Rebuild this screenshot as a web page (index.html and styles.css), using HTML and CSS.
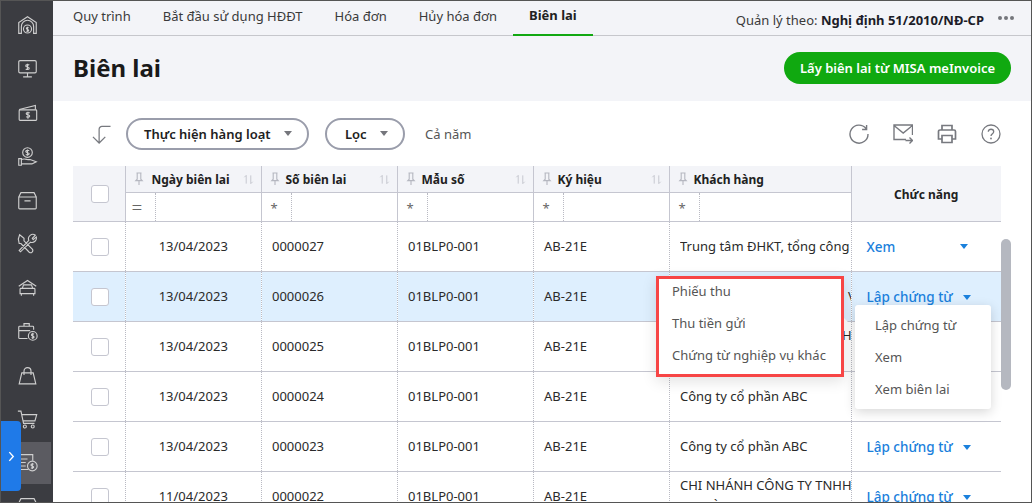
FILE: index.html
```html
<!DOCTYPE html>
<html lang="en">
<head>
    <meta charset="UTF-8">
    <meta name="viewport" content="width=device-width, initial-scale=1.0">
    <title>Biên lai</title>
    <link rel="stylesheet" href="styles.css">
</head>
<body>
    <svg class="defs" width="0" height="0">
        <symbol id="pin" viewBox="0 0 12 14"><path d="M3.5 1h5M4.2 1v6.2L2.8 8.6h6.4L7.8 7.2V1M6 8.6V13" fill="none" stroke="#b5b7c0" stroke-width="1.1"/></symbol>
        <symbol id="sort" viewBox="0 0 12 12"><path d="M3.5 10.5V1.5L1.5 3.5M8.5 1.5v9l2-2" fill="none" stroke="#c2c4cc" stroke-width="1"/></symbol>
    </svg>
    <div class="app">
        <nav class="sidebar">
            <div class="side-item"><svg class="side-icon" viewBox="0 0 24 24"><path d="M2 21V8.5L12 2l10 6.5V21h-3v-8a7 7 0 0 0-14 0v8z"/><circle cx="12" cy="16" r="4.6"/><path d="M12 13.5v5M13.3 14.6c-1-.6-2.6-.3-2.6.8s2.6 1 2.6 2.2-1.6 1.3-2.6.7"/></svg></div>
            <div class="side-item"><svg class="side-icon" viewBox="0 0 24 24"><rect x="2" y="3" width="20" height="14" rx="1.5"/><path d="M12 17v4M7 21.5h10M12 6.5v7M14 8c-1-.8-4-.6-4 1s4 1 4 2.600-3 1.800-4 1"/></svg></div>
            <div class="side-item"><svg class="side-icon" viewBox="0 0 24 24"><path d="M2.500 8.500 21 4v4.500"/><rect x="2.500" y="9" width="20" height="12" rx="1"/><path d="M12.500 11v8M14.500 12.500c-1-.8-4-.6-4 .9s4 1 4 2.600-3 1.700-4 .8"/></svg></div>
            <div class="side-item"><svg class="side-icon" viewBox="0 0 24 24"><circle cx="12" cy="7.500" r="5.500"/><path d="M12 4v7M14 5.300c-1-.7-4-.5-4 1.100s4 1 4 2.500-3 1.600-4 .9M2 14.500h3v7.500H2zM5 15.500c3-1.500 5-.5 7 0h3l7 2.500-5 2.500H5"/></svg></div>
            <div class="side-item"><svg class="side-icon" viewBox="0 0 24 24"><path d="M2 8l2.500-5h15L22 8v12.500a1 1 0 0 1-1 1H3a1 1 0 0 1-1-1zM2 8h20M8.500 12.500h7"/></svg></div>
            <div class="side-item"><svg class="side-icon" viewBox="0 0 24 24"><path d="M3 2l5 4v3l9.500 9.500a2.500 2.500 0 0 1-3.500 3.500L4.500 12H2.500L1.500 7zM21 2.500l-3.500 3.500 1 1.500 3.500-3a5 5 0 0 1-6.500 6L4 21.500 2.500 20 13.500 8.500A5 5 0 0 1 21 2.500z"/></svg></div>
            <div class="side-item"><svg class="side-icon" viewBox="0 0 24 24"><path d="M2 10.500 12 4l10 6.500M6 13l1.500-4h9L18 13M4.500 13h15a1 1 0 0 1 1 1v5h-17v-5a1 1 0 0 1 1-1zM5 19v2.500M19 19v2.500"/></svg></div>
            <div class="side-item"><svg class="side-icon" viewBox="0 0 24 24"><path d="M12 20H3a1 1 0 0 1-1-1V7a1 1 0 0 1 1-1h15a1 1 0 0 1 1 1v3M2 11h13M8 6V3h6v3"/><circle cx="18" cy="17" r="5"/><path d="M18 13.500v7M19.500 15c-1-.7-3-.5-3 .9s3 1 3 2.300-2 1.500-3 .8"/></svg></div>
            <div class="side-item"><svg class="side-icon" viewBox="0 0 24 24"><path d="M5.500 9h13l3 12.500h-19zM8 11.500V7a4 4 0 0 1 8 0v4.500"/></svg></div>
            <div class="side-item"><svg class="side-icon" viewBox="0 0 24 24"><path d="M1 2.500h3.500l3 14h12.500M5.500 6.500h17l-2 7H7"/><circle cx="9" cy="20" r="1.700"/><circle cx="18" cy="20" r="1.700"/></svg></div>
            <div class="side-item active"><svg class="side-icon" viewBox="0 0 24 24"><path d="M4 3h14v7M1 8h11M1 12h9M1 16h9M4 20h9"/><circle cx="17.500" cy="16" r="5.500"/><path d="M17.500 12.500v7M19 14c-1-.7-3-.5-3 .9s3 1 3 2.300-2 1.500-3 .8"/></svg></div>
            <div class="side-item"><svg class="side-icon" viewBox="0 0 24 24"><path d="M2 8l2.500-5h15L22 8v12H2zM2 8h20"/></svg></div>
            <div class="side-toggle"><svg viewBox="0 0 8 12" width="7" height="11"><path d="M1.500 1 6 6l-4.500 5" fill="none" stroke="#fff" stroke-width="1.600"/></svg></div>
        </nav>

        <main class="main">
            <header class="tabs">
                <a class="tab">Quy trình</a>
                <a class="tab">Bắt đầu sử dụng HĐĐT</a>
                <a class="tab">Hóa đơn</a>
                <a class="tab">Hủy hóa đơn</a>
                <a class="tab tab-active">Biên lai</a>
                <div class="decree">Quản lý theo: <b>Nghị định 51/2010/NĐ-CP</b></div>
                <div class="more"><i></i><i></i><i></i></div>
            </header>

            <section class="title-bar">
                <h1>Biên lai</h1>
                <button class="green-btn">Lấy biên lai từ MISA meInvoice</button>
            </section>

            <section class="toolbar">
                <svg class="back-icon" viewBox="0 0 20 20"><path d="M19.500 1.500h-9a3 3 0 0 0-3 3v14.500M1 12.500l6.500 6.500 6.500-6.500" fill="none" stroke="#77797f" stroke-width="1.300"/></svg>
                <button class="pill pill-bulk">Thực hiện hàng loạt<span class="caret-grey"></span></button>
                <button class="pill pill-filter">Lọc<span class="caret-grey"></span></button>
                <span class="period">Cả năm</span>
                <div class="tools">
                    <svg class="tool" viewBox="0 0 20 20"><path d="M17 4.500A9 9 0 1 0 19 10M17.600 1v4.500h-4.500" fill="none" stroke="#77797f" stroke-width="1.400"/></svg>
                    <svg class="tool" viewBox="0 0 20 20"><path d="M13 15.500H1V1h18.500v10M1 1.500l9.200 7.500 9.300-7.500M12.500 16.500h7M16.500 13.500l3 3-3 3" fill="none" stroke="#77797f" stroke-width="1.400"/></svg>
                    <svg class="tool" viewBox="0 0 20 20"><path d="M5 6V1.500h10V6M5 15H1.500V7.500a1.500 1.500 0 0 1 1.500-1.500h14a1.500 1.500 0 0 1 1.500 1.500V15H15M5 11.500h10V18.500H5z" fill="none" stroke="#77797f" stroke-width="1.700"/></svg>
                    <svg class="tool" viewBox="0 0 20 20"><circle cx="10" cy="10" r="9" fill="none" stroke="#77797f" stroke-width="1.300"/><path d="M7.300 7.700c0-3.300 5.400-3.300 5.400 0 0 2-2.700 2-2.700 4.300" fill="none" stroke="#77797f" stroke-width="1.300"/><circle cx="10" cy="14.500" r=".9" fill="#77797f"/></svg>
                </div>
            </section>

            <div class="table-wrap">
                <table class="grid">
                    <colgroup>
                        <col class="c-check"><col class="c-mid"><col class="c-mid"><col class="c-mid"><col class="c-mid"><col class="c-cust"><col class="c-fn">
                    </colgroup>
                    <thead>
                        <tr class="head-row">
                            <th rowspan="2" class="head-check"><span class="check"></span></th>
                            <th class="th-date"><div class="th-in"><svg class="pin"><use href="#pin"/></svg><span>Ngày biên lai</span><svg class="sort"><use href="#sort"/></svg></div></th>
                            <th><div class="th-in"><svg class="pin"><use href="#pin"/></svg><span>Số biên lai</span><svg class="sort"><use href="#sort"/></svg></div></th>
                            <th><div class="th-in"><svg class="pin"><use href="#pin"/></svg><span>Mẫu số</span><svg class="sort"><use href="#sort"/></svg></div></th>
                            <th><div class="th-in"><svg class="pin"><use href="#pin"/></svg><span>Ký hiệu</span><svg class="sort"><use href="#sort"/></svg></div></th>
                            <th><div class="th-in"><svg class="pin"><use href="#pin"/></svg><span>Khách hàng</span></div></th>
                            <th rowspan="2" class="head-fn">Chức năng</th>
                        </tr>
                        <tr class="filter-row">
                            <td><div class="op eq">=</div></td>
                            <td><div class="op">*</div></td>
                            <td><div class="op">*</div></td>
                            <td><div class="op">*</div></td>
                            <td><div class="op">*</div></td>
                        </tr>
                    </thead>
                    <tbody>
                        <tr>
                            <td class="cell-check"><span class="check"></span></td>
                            <td class="date">13/04/2023</td><td>0000027</td><td>01BLP0-001</td><td>AB-21E</td>
                            <td class="cust"><div class="one-line">Trung tâm ĐHKT, tổng công ty</div></td>
                            <td class="fn"><span class="fn-in">Xem<span class="caret-blue caret-xem"></span></span></td>
                        </tr>
                        <tr class="selected">
                            <td class="cell-check"><span class="check"></span></td>
                            <td class="date">13/04/2023</td><td>0000026</td><td>01BLP0-001</td><td>AB-21E</td>
                            <td class="cust"><div class="one-line">CHI NHÁNH CÔNG TY, TNH V</div></td>
                            <td class="fn"><span class="fn-in">Lập chứng từ<span class="caret-blue"></span></span></td>
                        </tr>
                        <tr>
                            <td class="cell-check"><span class="check"></span></td>
                            <td class="date">13/04/2023</td><td>0000025</td><td>01BLP0-001</td><td>AB-21E</td>
                            <td class="cust"><div class="two-line">CHI NHÁNH CÔNG TY TNHH<br>TẠI HÀ NAM</div></td>
                            <td class="fn"><span class="fn-in">Lập chứng từ<span class="caret-blue"></span></span></td>
                        </tr>
                        <tr>
                            <td class="cell-check"><span class="check"></span></td>
                            <td class="date">13/04/2023</td><td>0000024</td><td>01BLP0-001</td><td>AB-21E</td>
                            <td class="cust">Công ty cổ phần ABC</td>
                            <td class="fn"><span class="fn-in">Lập chứng từ<span class="caret-blue"></span></span></td>
                        </tr>
                        <tr>
                            <td class="cell-check"><span class="check"></span></td>
                            <td class="date">13/04/2023</td><td>0000023</td><td>01BLP0-001</td><td>AB-21E</td>
                            <td class="cust">Công ty cổ phần ABC</td>
                            <td class="fn"><span class="fn-in">Lập chứng từ<span class="caret-blue"></span></span></td>
                        </tr>
                        <tr>
                            <td class="cell-check"><span class="check"></span></td>
                            <td class="date">11/04/2023</td><td>0000022</td><td>01BLP0-001</td><td>AB-21E</td>
                            <td class="cust"><div class="two-line">CHI NHÁNH CÔNG TY TNHH<br>TẠI HÀ NAM</div></td>
                            <td class="fn"><span class="fn-in">Lập chứng từ<span class="caret-blue"></span></span></td>
                        </tr>
                    </tbody>
                </table>
            </div>
        </main>

        <div class="scroll-thumb"></div>
        <div class="menu-arrow"></div>
        <div class="menu menu-sub">
            <div class="menu-item">Phiếu thu</div>
            <div class="menu-item">Thu tiền gửi</div>
            <div class="menu-item">Chứng từ nghiệp vụ khác</div>
        </div>
        <div class="menu menu-main">
            <div class="menu-item">Lập chứng từ</div>
            <div class="menu-item">Xem</div>
            <div class="menu-item">Xem biên lai</div>
        </div>
    </div>
</body>
</html>
```

FILE: styles.css
```css
* {
    box-sizing: border-box;
}

body {
    margin: 0;
    font-family: "Noto Sans", Arial, sans-serif;
    font-size: 13px;
    color: #212121;
    background-color: white;
}

.defs {
    position: absolute;
}

.app {
    position: relative;
    display: flex;
    width: 1032px;
    height: 503px;
    overflow: hidden;
    border: 1px solid #555;
}

/* sidebar */
.sidebar {
    position: relative;
    flex: none;
    width: 52px;
    padding-top: 3px;
    background-color: #3b3c41;
    overflow: hidden;
}

.side-item {
    display: flex;
    justify-content: center;
    align-items: center;
    width: 50px;
    height: 42px;
    margin-bottom: 1.8px;
    padding-left: 2px;
}

.side-item.active {
    background-color: #5b5b61;
}

.side-icon {
    width: 21px;
    height: 21px;
    fill: none;
    stroke: #cfcfcf;
    stroke-width: 1.3;
}

.side-toggle {
    position: absolute;
    left: 0;
    top: 420px;
    width: 20px;
    height: 70px;
    display: flex;
    align-items: center;
    justify-content: center;
    background-color: #1f7ae8;
    border-radius: 0 4px 4px 0;
}

/* main */
.main {
    flex: 1;
    min-width: 0;
    display: flex;
    flex-direction: column;
}

.tabs {
    flex: none;
    display: flex;
    align-items: stretch;
    height: 35px;
    padding-left: 4px;
    padding-right: 17px;
    background-color: #f3f4f8;
    border-bottom: 1px solid #c6c7cc;
}

.tab {
    display: flex;
    align-items: center;
    padding: 0 16px 6px;
    height: 35px;
    color: #3a3a3a;
}

.tab-active {
    font-weight: 700;
    color: #212121;
    border-bottom: 2px solid #12a812;
}

.decree {
    margin-left: auto;
    align-self: center;
    padding-top: 4px;
    color: #3a3a3a;
}

.decree b {
    color: #1c1c28;
}

.more {
    display: flex;
    align-items: center;
    gap: 2px;
    margin-left: 14px;
    padding-bottom: 1px;
}

.more i {
    width: 4px;
    height: 4px;
    border-radius: 50%;
    background-color: #75767c;
}

.title-bar {
    flex: none;
    display: flex;
    justify-content: space-between;
    align-items: center;
    height: 65px;
    padding: 0 20px;
    background-color: #f3f4f8;
}

h1 {
    margin: 0 0 3px;
    font-size: 24px;
    font-weight: 700;
    color: #1a1a1a;
}

.green-btn {
    width: 227px;
    height: 32px;
    padding: 0;
    margin-bottom: 2px;
    border: none;
    border-radius: 16px;
    font: 600 13px "Noto Sans", Arial, sans-serif;
    color: white;
    background-color: #10a910;
}

.toolbar {
    flex: none;
    display: flex;
    align-items: center;
    height: 65px;
    padding: 0 30px 0 39px;
    background-color: white;
}

.back-icon {
    width: 19px;
    height: 19px;
    margin-top: 1px;
    margin-right: 15px;
}

.pill {
    display: flex;
    align-items: center;
    justify-content: space-between;
    height: 32px;
    padding: 0 15px 0 16px;
    border: 2px solid #9a9dab;
    border-radius: 16px;
    background-color: white;
    font: 600 13px "Noto Sans", Arial, sans-serif;
    color: #212121;
}

.pill-bulk {
    width: 183px;
    margin-right: 16px;
}

.pill-filter {
    width: 80px;
    padding-left: 18px;
    margin-right: 20px;
}

.caret-grey {
    width: 0;
    height: 0;
    border-left: 4.5px solid transparent;
    border-right: 4.5px solid transparent;
    border-top: 5px solid #75767c;
    margin-bottom: 1px;
}

.period {
    color: #555;
}

.tools {
    margin-left: auto;
    display: flex;
    gap: 24px;
}

.tool {
    width: 20px;
    height: 20px;
}

/* table */
.table-wrap {
    flex: 1;
    min-height: 0;
    overflow: hidden;
    padding-left: 20px;
}

.grid {
    table-layout: fixed;
    border-collapse: collapse;
    width: 928px;
}

.c-check { width: 52px; }
.c-mid { width: 136px; }
.c-cust { width: 182px; }
.c-fn { width: 150px; }

.grid th {
    padding: 0;
    background-color: #f3f4f8;
    font-size: 12px;
    font-weight: 700;
    text-align: left;
    color: #212121;
    border-left: 1px solid #c5c6d0;
    border-bottom: 1px solid #c5c6d0;
}

.grid th:first-child {
    border-left: none;
}

.head-row {
    height: 26px;
}

.th-in {
    display: flex;
    align-items: center;
    height: 25px;
    padding: 2px 0 0 7px;
}

.pin {
    width: 12px;
    height: 14px;
    margin-right: 5px;
    margin-bottom: 2px;
    flex: none;
}

.th-date .pin {
    margin-right: 7px;
}

.sort {
    width: 11px;
    height: 11px;
    margin-left: auto;
    margin-right: 7px;
    flex: none;
}

.grid .head-check {
    padding-left: 2px;
    text-align: center;
    border-bottom: 1px solid #c5c6d0;
}

.grid .head-fn {
    padding-top: 2px;
    text-align: center;
}

.filter-row {
    height: 29px;
}

.filter-row td {
    padding: 0;
    height: 29px;
    background-color: white;
    border-left: 1px solid #c5c6d0;
    border-bottom: 1px solid #c5c6d0;
}

.op {
    width: 30px;
    height: 28px;
    border-right: 1px dotted #b9bac3;
    padding: 5px 0 0 9px;
    font-size: 13px;
    line-height: 20px;
    color: #666;
}

.eq {
    padding: 0 0 0 6px;
    font-size: 19px;
    font-weight: 300;
    line-height: 28px;
}

.check {
    display: inline-block;
    width: 18px;
    height: 18px;
    background-color: white;
    border: 1px solid #c5c6d0;
    border-radius: 3px;
    vertical-align: middle;
}

tbody tr {
    height: 50px;
}

tbody td {
    padding: 0 10px 0 10.5px;
    background-color: white;
    border-left: 1px dotted #b9bac3;
    border-bottom: 1px solid #c5c6d0;
    white-space: nowrap;
    overflow: hidden;
    color: #2a2a2a;
}

tbody td:first-child {
    border-left: none;
}

tbody tr.selected td {
    background-color: #deeffe;
}

.grid tbody .cell-check {
    padding: 0 0 0 2px;
    text-align: center;
}

.date {
    text-align: center;
}

.grid tbody .cust {
    padding-right: 0;
}

.one-line,
.two-line {
    overflow: hidden;
    white-space: nowrap;
}

.two-line {
    line-height: 21px;
    max-height: 42px;
}

.grid tbody .fn {
    padding: 2px 15px 0;
}

.fn-in {
    display: flex;
    align-items: center;
    justify-content: space-between;
    font-size: 13.5px;
    font-weight: 500;
    color: #1a80dc;
}

.caret-blue {
    width: 0;
    height: 0;
    border-left: 4px solid transparent;
    border-right: 4px solid transparent;
    border-top: 5px solid #1a80dc;
    margin-right: 15px;
}

.caret-xem {
    margin-right: 18px;
    margin-bottom: 2px;
}

/* floating parts */
.scroll-thumb {
    position: absolute;
    left: 1000px;
    top: 238px;
    width: 10px;
    height: 151px;
    border-radius: 5px;
    background-color: #b5b8c0;
}

.menu {
    position: absolute;
    background-color: white;
}

.menu-sub {
    left: 655px;
    top: 275px;
    width: 188px;
    height: 101px;
    border: 3px solid #f74545;
    box-shadow: 0 4px 14px rgba(0, 0, 0, 0.12);
}

.menu-main {
    left: 854px;
    top: 304px;
    width: 136px;
    height: 104px;
    padding: 5px 0;
    border-radius: 3px;
    box-shadow: 0 3px 12px rgba(0, 0, 0, 0.16);
}

.menu-item {
    height: 32px;
    line-height: 30px;
    padding-left: 13px;
    color: #555;
}

.menu-sub .menu-item {
    line-height: 24px;
}

.menu-main .menu-item {
    padding-left: 20px;
}

.menu-arrow {
    position: absolute;
    left: 839px;
    top: 318px;
    width: 7px;
    height: 7px;
    background-color: white;
    transform: rotate(45deg);
}
```
